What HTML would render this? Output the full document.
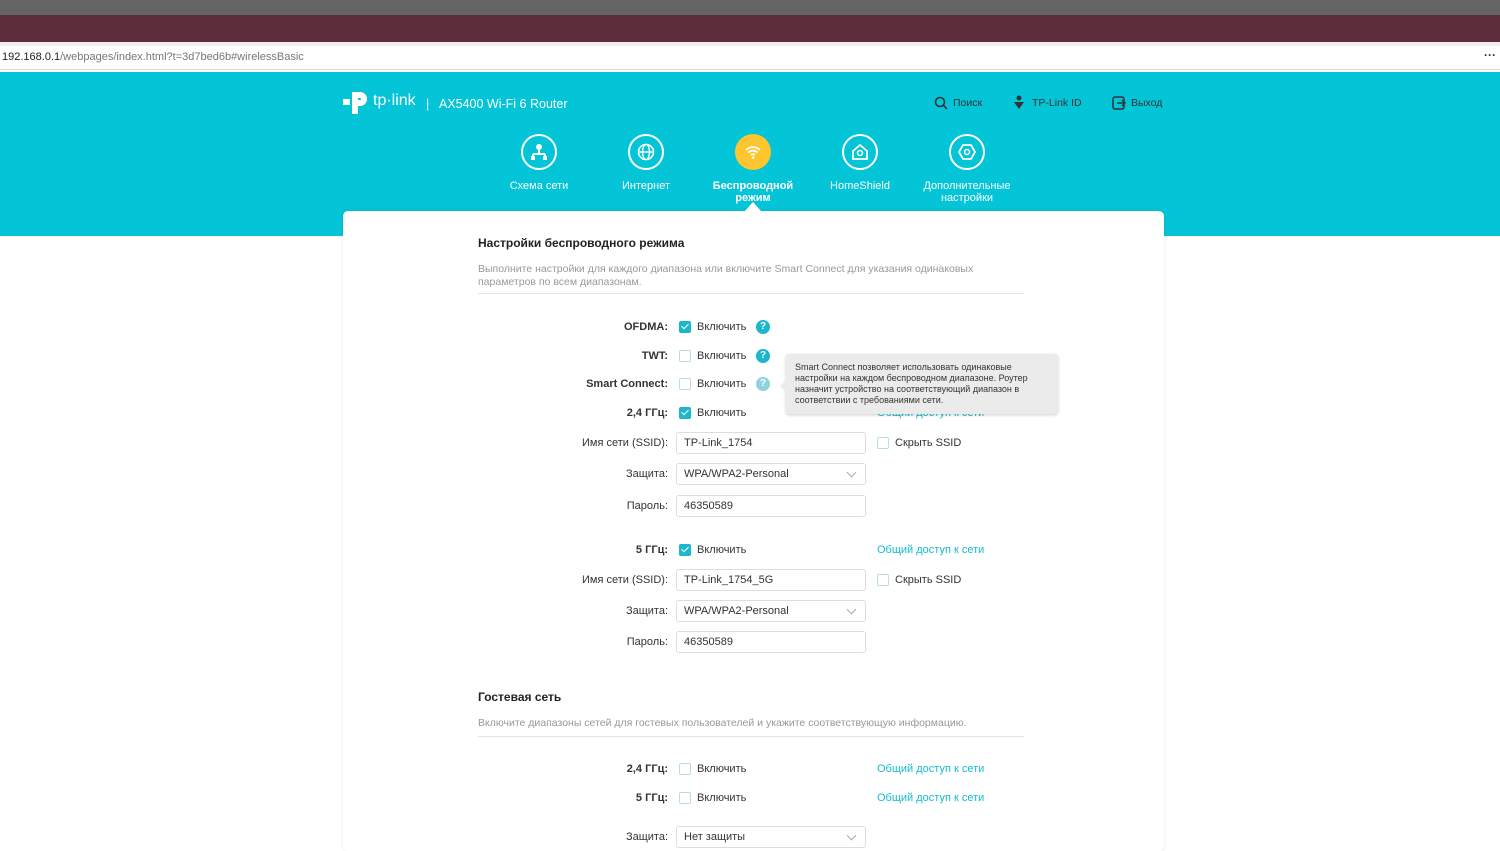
<!DOCTYPE html>
<html><head><meta charset="utf-8"><style>
*{margin:0;padding:0;box-sizing:border-box}
body{width:1500px;height:844px;overflow:hidden;background:#fff;font-family:"Liberation Sans",Arial,sans-serif;position:relative;color:#333}
.a{position:absolute;white-space:nowrap}
.lbl{position:absolute;right:832px;font-size:11px;color:#333;transform:translateY(-50%)}
.b{font-weight:bold}
.cb{position:absolute;left:679px;width:12px;height:12px;border:1px solid #b9dde2;border-radius:2px;background:#fff;transform:translateY(-50%)}
.cb.on{background:#1eb6cc;border-color:#1eb6cc}
.cb.on:after{content:"";position:absolute;left:3px;top:0px;width:3px;height:6px;border:solid #fff;border-width:0 1.5px 1.5px 0;transform:rotate(45deg)}
.cbt{position:absolute;left:697px;font-size:11px;transform:translateY(-50%)}
.inp{position:absolute;left:676px;width:190px;height:22px;border:1px solid #ddd;border-radius:3px;font-size:11px;padding:4px 7px;transform:translateY(-50%)}
.q{position:absolute;left:756px;width:14px;height:14px;border-radius:50%;background:#1eb6cc;color:#fff;font-size:10px;font-weight:bold;text-align:center;line-height:14px;transform:translateY(-50%)}
.lk{position:absolute;left:877px;font-size:11px;color:#15bccf;transform:translateY(-50%)}
.nav{position:absolute;top:134px;width:36px;height:36px;border:2px solid #fff;border-radius:50%}
.nt{position:absolute;top:180px;font-size:11px;color:#fff;text-align:center;width:110px;line-height:12px}
.chev{position:absolute;right:10px;top:5px;width:7px;height:7px;border:solid #aaa;border-width:0 1px 1px 0;transform:rotate(45deg)}
</style></head><body>
<div class="a" style="left:0;top:0;width:1500px;height:15px;background:#646464"></div>
<div class="a" style="left:0;top:15px;width:1500px;height:27px;background:#5c2d3b"></div>
<div class="a" style="left:0;top:42px;width:1500px;height:4px;background:#f3ecef"></div>
<div class="a" style="left:0;top:46px;width:1500px;height:24px;background:#fff;border-bottom:1px solid #ddd"></div>
<div class="a" style="left:2px;top:51px;font-size:11px;color:#777"><span style="color:#222">192.168.0.1</span>/webpages/index.html?t=3d7bed6b#wirelessBasic</div>
<div class="a" style="left:1484px;top:48px;font-size:12px;color:#333;font-weight:bold">···</div>
<div class="a" style="left:0;top:72px;width:1500px;height:164px;background:#04c4d8"></div>
<svg class="a" style="left:342px;top:88px" width="30" height="28" viewBox="0 0 30 28"><path d="M10 4h8a7 7 0 0 1 0 14h-3v-6h3a1 1 0 0 0 0-2h-2v16h-6z" fill="#fff"/><rect x="1" y="11" width="7" height="6" fill="#fff"/></svg>
<div class="a" style="left:373px;top:92px;font-size:16px;color:#fff">tp·link</div>
<div class="a" style="left:426px;top:97px;font-size:12.5px;color:#fff">|&nbsp;&nbsp; AX5400 Wi-Fi 6 Router</div>
<svg class="a" style="left:934px;top:96px" width="14" height="14"><circle cx="6" cy="6" r="4.5" stroke="#333" stroke-width="1.6" fill="none"/><path d="M9 9l4 4" stroke="#333" stroke-width="1.6"/></svg>
<div class="a" style="left:953px;top:97px;font-size:10.5px;color:#333">Поиск</div>
<svg class="a" style="left:1013px;top:95px" width="12" height="15"><circle cx="6" cy="3" r="2.5" fill="#333"/><path d="M1 7l5 7 5-7z" fill="#333"/></svg>
<div class="a" style="left:1032px;top:97px;font-size:10.5px;color:#333">TP-Link ID</div>
<svg class="a" style="left:1112px;top:96px" width="14" height="14"><rect x="1" y="1" width="11" height="12" rx="2" stroke="#333" stroke-width="1.5" fill="none"/><path d="M5 7h8M10 4l3 3-3 3" stroke="#333" stroke-width="1.5" fill="none"/></svg>
<div class="a" style="left:1131px;top:97px;font-size:10.5px;color:#333">Выход</div>
<div class="nav" style="left:521px"></div>
<svg class="a" style="left:529px;top:142px" width="20" height="20"><circle cx="10" cy="5" r="3" fill="#fff"/><path d="M10 8v4M4 12h12M4 12v3M16 12v3" stroke="#fff" stroke-width="2"/><rect x="2" y="14" width="4" height="4" fill="#fff"/><rect x="14" y="14" width="4" height="4" fill="#fff"/></svg>
<div class="nt" style="left:484px">Схема сети</div>
<div class="nav" style="left:628px"></div>
<svg class="a" style="left:636px;top:142px" width="20" height="20"><circle cx="10" cy="10" r="7.5" stroke="#fff" stroke-width="1.6" fill="none"/><ellipse cx="10" cy="10" rx="3.5" ry="7.5" stroke="#fff" stroke-width="1.4" fill="none"/><path d="M2.5 10h15" stroke="#fff" stroke-width="1.4"/></svg>
<div class="nt" style="left:591px">Интернет</div>
<div class="a" style="left:735px;top:134px;width:36px;height:36px;border-radius:50%;background:#fdc62e"></div>
<svg class="a" style="left:743px;top:142px" width="20" height="20"><path d="M3 8a10 10 0 0 1 14 0M5.5 10.5a6.5 6.5 0 0 1 9 0M8 13a3 3 0 0 1 4 0" stroke="#fff" stroke-width="1.8" fill="none"/><circle cx="10" cy="15.5" r="1.3" fill="#fff"/></svg>
<div class="nt b" style="left:698px">Беспроводной<br>режим</div>
<div class="nav" style="left:842px"></div>
<svg class="a" style="left:850px;top:142px" width="20" height="20"><path d="M3 9l7-6 7 6v8H3z" stroke="#fff" stroke-width="1.8" fill="none"/><circle cx="10" cy="11" r="2.5" stroke="#fff" stroke-width="1.5" fill="none"/></svg>
<div class="nt" style="left:805px">HomeShield</div>
<div class="nav" style="left:949px"></div>
<svg class="a" style="left:957px;top:142px" width="20" height="20"><path d="M6 3h8l4 7-4 7H6l-4-7z" stroke="#fff" stroke-width="1.8" fill="none"/><circle cx="10" cy="10" r="2.5" stroke="#fff" stroke-width="1.5" fill="none"/></svg>
<div class="nt" style="left:912px">Дополнительные<br>настройки</div>
<div class="a" style="left:343px;top:211px;width:821px;height:640px;background:#fff;border-radius:5px;box-shadow:0 0 3px rgba(0,0,0,.12)"></div>
<div class="a" style="left:745px;top:202px;width:0;height:0;border-left:8px solid transparent;border-right:8px solid transparent;border-bottom:9px solid #fff"></div>
<div class="a b" style="left:478px;top:236px;font-size:12px;color:#222">Настройки беспроводного режима</div>
<div class="a" style="left:478px;top:263px;font-size:10.5px;color:#999;line-height:13px">Выполните настройки для каждого диапазона или включите Smart Connect для указания одинаковых<br>параметров по всем диапазонам.</div>
<div class="a" style="left:478px;top:293px;width:546px;height:1px;background:#e3e3e3"></div>

<div class="lbl b" style="top:327px">OFDMA:</div><div class="cb on" style="top:327px"></div><div class="cbt" style="top:327px">Включить</div><div class="q" style="top:327px">?</div>
<div class="lbl b" style="top:356px">TWT:</div><div class="cb" style="top:356px"></div><div class="cbt" style="top:356px">Включить</div><div class="q" style="top:356px">?</div>
<div class="lbl b" style="top:384px">Smart Connect:</div><div class="cb" style="top:384px"></div><div class="cbt" style="top:384px">Включить</div><div class="q" style="top:384px;background:#8fd3dd">?</div>
<div class="lbl b" style="top:413px">2,4 ГГц:</div><div class="cb on" style="top:413px"></div><div class="cbt" style="top:413px">Включить</div><div class="lk" style="top:413px">Общий доступ к сети</div>
<div class="lbl" style="top:443px">Имя сети (SSID):</div><div class="inp" style="top:443px">TP-Link_1754</div><div class="cb" style="top:443px;left:877px"></div><div class="a" style="left:895px;top:437px;font-size:11px">Скрыть SSID</div>
<div class="lbl" style="top:474px">Защита:</div><div class="inp" style="top:474px">WPA/WPA2-Personal<div class="chev"></div></div>
<div class="lbl" style="top:506px">Пароль:</div><div class="inp" style="top:506px">46350589</div>

<div class="lbl b" style="top:550px">5 ГГц:</div><div class="cb on" style="top:550px"></div><div class="cbt" style="top:550px">Включить</div><div class="lk" style="top:550px">Общий доступ к сети</div>
<div class="lbl" style="top:580px">Имя сети (SSID):</div><div class="inp" style="top:580px">TP-Link_1754_5G</div><div class="cb" style="top:580px;left:877px"></div><div class="a" style="left:895px;top:574px;font-size:11px">Скрыть SSID</div>
<div class="lbl" style="top:611px">Защита:</div><div class="inp" style="top:611px">WPA/WPA2-Personal<div class="chev"></div></div>
<div class="lbl" style="top:642px">Пароль:</div><div class="inp" style="top:642px">46350589</div>

<div class="a" style="left:786px;top:354px;width:272px;height:60px;background:#ebebeb;border-radius:3px;box-shadow:0 1px 3px rgba(0,0,0,.2);font-size:9px;color:#333;line-height:11px;padding:8px 9px;white-space:normal">Smart Connect позволяет использовать одинаковые настройки на каждом беспроводном диапазоне. Роутер назначит устройство на соответствующий диапазон в соответствии с требованиями сети.</div>
<div class="a" style="left:780px;top:380px;width:0;height:0;border-top:6px solid transparent;border-bottom:6px solid transparent;border-right:6px solid #ebebeb"></div>

<div class="a b" style="left:478px;top:690px;font-size:12px;color:#222">Гостевая сеть</div>
<div class="a" style="left:478px;top:717px;font-size:10.5px;color:#999">Включите диапазоны сетей для гостевых пользователей и укажите соответствующую информацию.</div>
<div class="a" style="left:478px;top:736px;width:546px;height:1px;background:#e3e3e3"></div>
<div class="lbl b" style="top:769px">2,4 ГГц:</div><div class="cb" style="top:769px"></div><div class="cbt" style="top:769px">Включить</div><div class="lk" style="top:769px">Общий доступ к сети</div>
<div class="lbl b" style="top:798px">5 ГГц:</div><div class="cb" style="top:798px"></div><div class="cbt" style="top:798px">Включить</div><div class="lk" style="top:798px">Общий доступ к сети</div>
<div class="lbl" style="top:837px">Защита:</div><div class="inp" style="top:837px">Нет защиты<div class="chev"></div></div>
</body></html>
